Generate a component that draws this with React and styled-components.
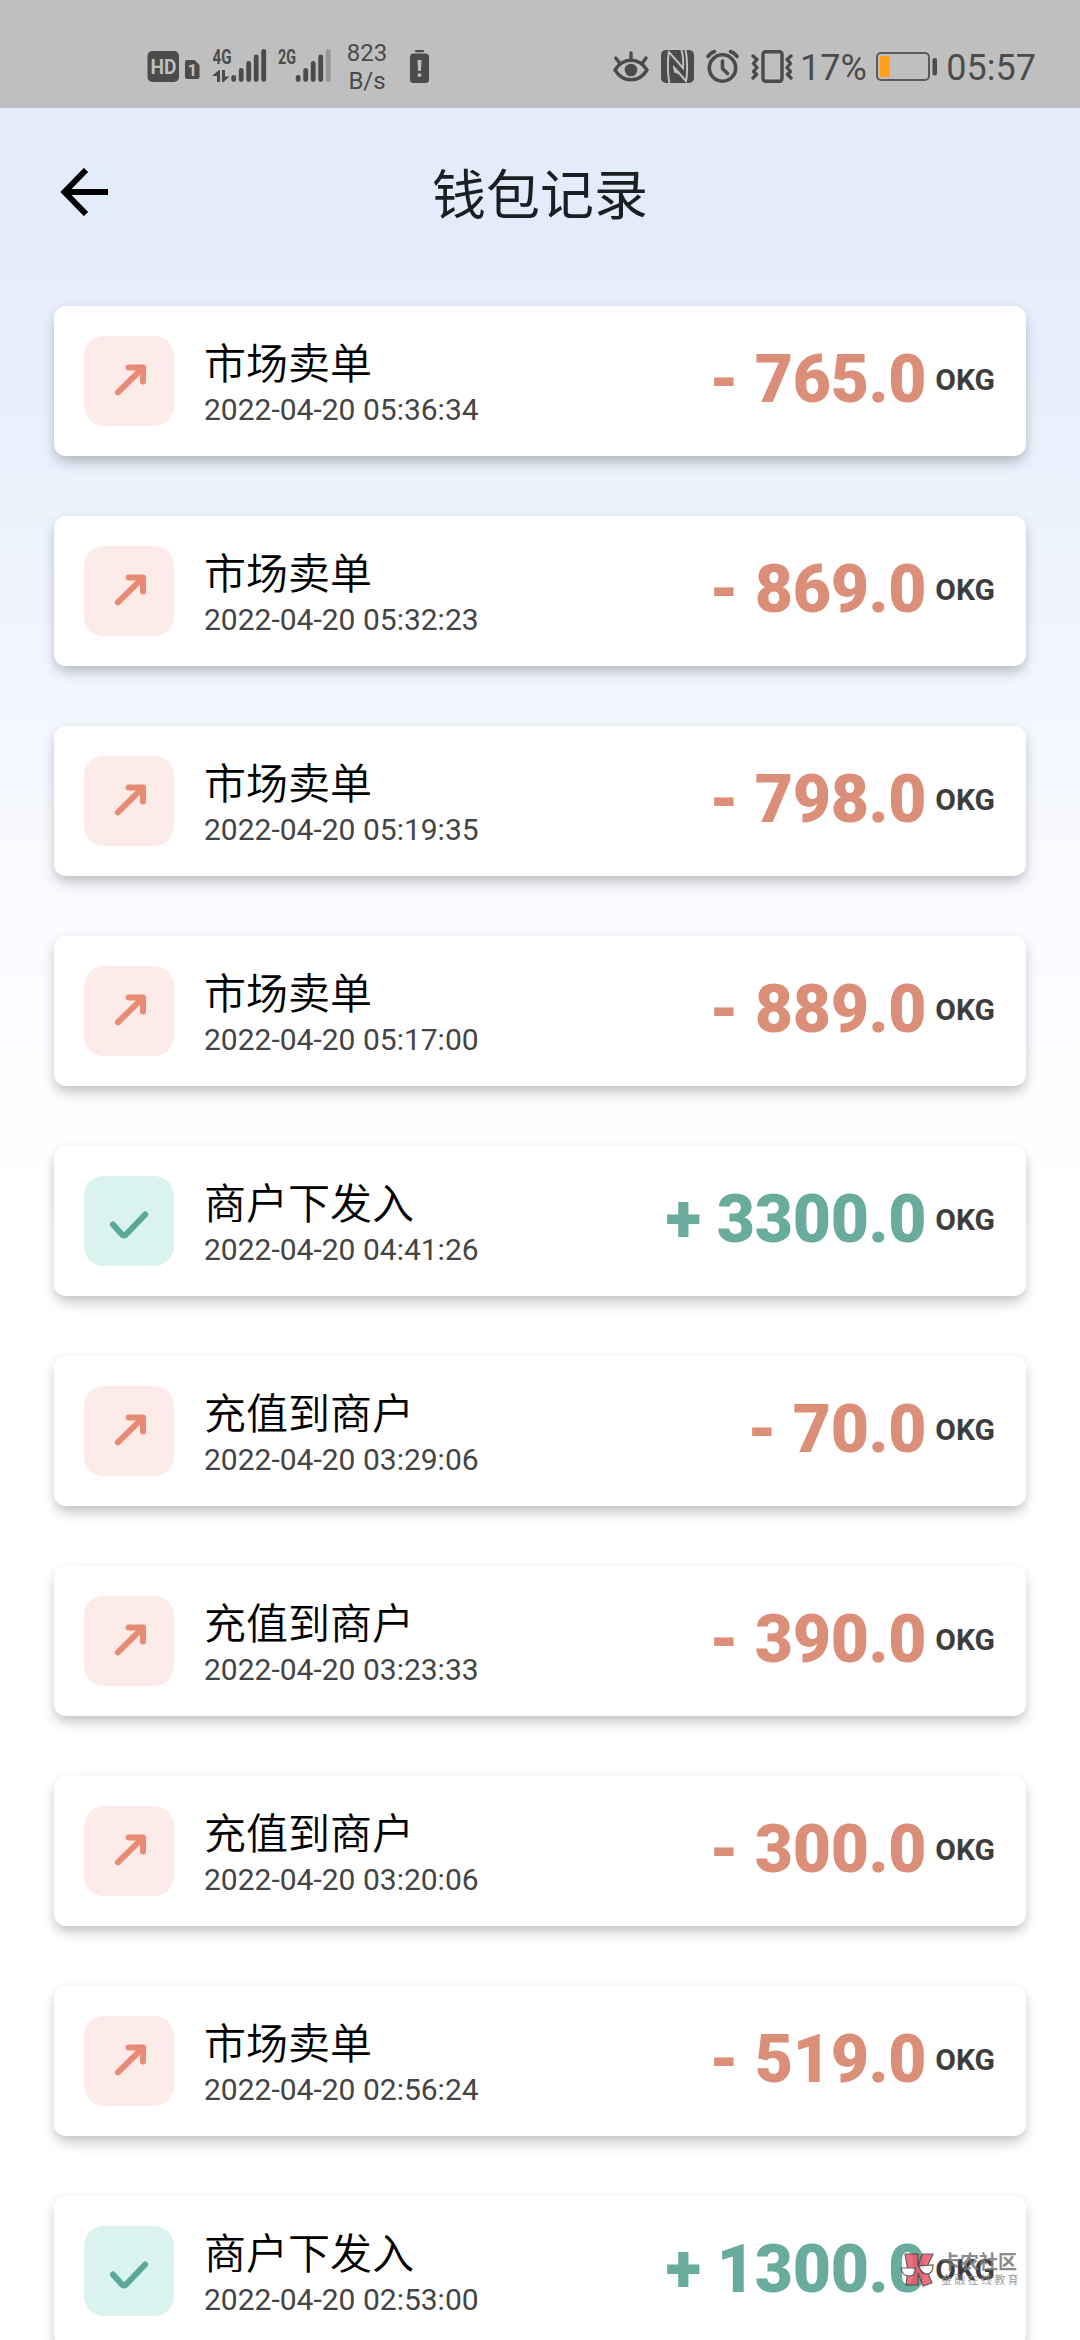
import React from "react";
import styled, { createGlobalStyle } from "styled-components";

const GlobalStyle = createGlobalStyle`
  * {
    box-sizing: border-box;
  }

  body {
    margin: 0;
    background: #fff;
    font-family: Roboto, "Noto Sans CJK SC", sans-serif;
  }
`;

const Screen = styled.div`
  position: relative;
  width: 1080px;
  height: 2340px;
  overflow: hidden;
  background: linear-gradient(#e4ecfb 0, #e6edfc 276px, #e9f1fc 450px, #f1f5fd 640px, #f7f9ff 830px, #fbfcff 1000px, #ffffff 1240px);
`;

/* status bar start */
const StatusBar = styled.div`
  display: flex;
  justify-content: space-between;
  height: 108px;
  padding: 48px 44px 0 147px;
  background: #bfbfbf;
  color: #4b4b4b;
`;

const StatusGroup = styled.div`
  display: flex;
  align-items: flex-start;
`;

const Glyph = styled.svg`
  display: block;
  flex: none;
  height: 36px;
  width: ${(p) => p.$w}px;
  margin-left: ${(p) => p.$gap || 0}px;
  overflow: visible;
  fill: #4b4b4b;
`;

const Speed = styled.div`
  width: 46px;
  margin: -9px 0 0 13px;
  font-size: 24px;
  line-height: 28px;
  text-align: center;
`;

const StatusText = styled.span`
  margin-left: ${(p) => p.$gap}px;
  font-size: 36px;
  line-height: 40px;
  white-space: nowrap;
`;
/* status bar end */

const Header = styled.header`
  display: grid;
  grid-template-columns: 108px 1fr 108px;
  align-items: center;
  height: 168px;
  background: #e3ecfa;

  h1 {
    margin: 9px 0 0;
    font-size: 54px;
    line-height: 80px;
    font-weight: 400;
    text-align: center;
    color: #1b1f23;
  }
`;

const BackButton = styled.button`
  display: block;
  width: 48px;
  height: 48px;
  margin: 0 0 0 60px;
  padding: 0;
  border: 0;
  background: none;
`;

const RecordList = styled.main`
  display: flex;
  flex-direction: column;
  gap: 60px;
  padding: 30px 54px 0;
`;

const Card = styled.article`
  display: flex;
  align-items: center;
  height: 150px;
  flex: none;
  padding: 0 31px 0 30px;
  border-radius: 12px;
  background: #fff;
  box-shadow: 0 8px 14px -2px rgba(0, 0, 0, 0.21), 0 2px 12px rgba(0, 0, 0, 0.07);
`;

const Badge = styled.div`
  width: 90px;
  height: 90px;
  border-radius: 20px;
  background: ${(p) => (p.$income ? "#daf3ee" : "#fcebe9")};

  svg {
    display: block;
    fill: none;
    stroke: ${(p) => (p.$income ? "#59a899" : "#e78b75")};
    stroke-width: 6;
    stroke-linecap: round;
    stroke-linejoin: round;
  }
`;

const Info = styled.div`
  flex: 1;
  margin-left: 30px;
  padding-top: 4px;

  h2 {
    margin: 0;
    font-size: 42px;
    line-height: 54px;
    font-weight: 350;
    color: #000;
  }

  time {
    display: block;
    font-size: 30px;
    line-height: 36px;
    color: #444;
  }
`;

const Amount = styled.div`
  display: flex;
  align-items: center;
  font-weight: 700;

  strong {
    margin-bottom: 3px;
    font-size: 66px;
    line-height: 78px;
    letter-spacing: -0.3px;
    white-space: pre;
    color: ${(p) => (p.$income ? "#69ab9c" : "#db8e78")};
  }

  span {
    margin: 0 0 3px 9px;
    font-size: 30px;
    color: #3d3d3d;
  }
`;

const Watermark = styled.div`
  position: absolute;
  left: 900px;
  top: 2252px;
  display: flex;
  gap: 7px;
  opacity: 0.85;

  b {
    display: block;
    font-size: 19px;
    line-height: 22px;
    font-weight: 700;
    color: #777;
  }

  small {
    display: block;
    font-size: 11px;
    line-height: 14px;
    letter-spacing: 2.3px;
    color: #8a8a8a;
    white-space: nowrap;
  }
`;

const records = [
  { title: "市场卖单", time: "2022-04-20 05:36:34", amount: "- 765.0" },
  { title: "市场卖单", time: "2022-04-20 05:32:23", amount: "- 869.0" },
  { title: "市场卖单", time: "2022-04-20 05:19:35", amount: "- 798.0" },
  { title: "市场卖单", time: "2022-04-20 05:17:00", amount: "- 889.0" },
  { title: "商户下发入", time: "2022-04-20 04:41:26", amount: "+ 3300.0" },
  { title: "充值到商户", time: "2022-04-20 03:29:06", amount: "- 70.0" },
  { title: "充值到商户", time: "2022-04-20 03:23:33", amount: "- 390.0" },
  { title: "充值到商户", time: "2022-04-20 03:20:06", amount: "- 300.0" },
  { title: "市场卖单", time: "2022-04-20 02:56:24", amount: "- 519.0" },
  { title: "商户下发入", time: "2022-04-20 02:53:00", amount: "+ 1300.0" },
];

const Bars = ({ x, weak }) =>
  [7, 14, 21, 27.5, 33].map((h, i) => (
    <rect
      key={h}
      x={x + i * 7.5}
      y={34 - h}
      width="4.8"
      height={h}
      rx="2.4"
      opacity={weak && i === 4 ? 0.35 : 1}
    />
  ));

const netText = {
  fontFamily: "Roboto",
  fontWeight: 700,
  fontSize: 20,
  lengthAdjust: "spacingAndGlyphs",
};

const StatusIcons = () => (
  <StatusBar>
    <StatusGroup>
      <Glyph $w={32} viewBox="0 0 32 36">
        <rect y="3" x="0.5" width="31.5" height="31" rx="5" />
        <text x="3.5" y="26" fontSize="21" fontWeight="700" fill="#bfbfbf" textLength="26" lengthAdjust="spacingAndGlyphs">
          HD
        </text>
      </Glyph>
      <Glyph $w={14} $gap={6} viewBox="0 0 14 36">
        <path d="M2 12h7.5l5 5v12a2 2 0 0 1-2 2H2a2 2 0 0 1-2-2V14a2 2 0 0 1 2-2z" />
        <text x="2.6" y="28" fontSize="17" fontWeight="700" fill="#bfbfbf">
          1
        </text>
      </Glyph>
      <Glyph $w={54} $gap={13} viewBox="0 0 54 36">
        <text x="0.5" y="16" textLength="19" {...netText}>
          4G
        </text>
        <path d="M5 22v12h3V22H7L0 28h5zM10 22v12h1.5l6-5.5H13V22z" />
        <Bars x={19.3} />
      </Glyph>
      <Glyph $w={53} $gap={12} viewBox="0 0 53 36">
        <text x="0" y="16" textLength="18" {...netText}>
          2G
        </text>
        <Bars x={17.8} weak />
      </Glyph>
      <Speed>
        823
        <br />
        B/s
      </Speed>
      <Glyph $w={19} $gap={20} viewBox="0 0 19 36">
        <rect x="5" y="2" width="9" height="2.2" rx="1" />
        <rect x="0" y="5.5" width="19" height="29.5" rx="3.5" />
        <path d="M7.5 12h4l-.6 11H8.1zM7.8 25.5h3.4v3.2H7.8z" fill="#bfbfbf" />
      </Glyph>
    </StatusGroup>

    <StatusGroup>
      <Glyph $w={36} viewBox="0 0 36 36">
        <g fill="none" stroke="#4b4b4b" strokeWidth="3.4" strokeLinecap="round">
          <path d="M2 22C10 9 26 9 34 22C26 35 10 35 2 22z" strokeLinejoin="round" />
          <path d="M18 11V5M6.5 15L2.8 10M29.5 15L33 10" />
        </g>
        <circle cx="18" cy="22" r="6.3" />
      </Glyph>
      <Glyph $w={33} $gap={12} viewBox="0 0 33 36">
        <rect y="2" width="33" height="33" rx="5" />
        <g fill="none" stroke="#bfbfbf" strokeWidth="2">
          <path d="M8.5 35C6.5 27 6.5 10 8 4L22 20C22.500 13 22 7 20.5 2" />
          <path d="M24.500 2C26.500 10 26.500 27 25 33L12.500 19" />
        </g>
        <path d="M12 17l9 10.500-8-3z" fill="#bfbfbf" />
      </Glyph>
      <Glyph $w={33} $gap={12} viewBox="0 0 33 36">
        <g fill="none" stroke="#4b4b4b" strokeWidth="3.6" strokeLinecap="round" strokeLinejoin="round">
          <circle cx="16.5" cy="20" r="13.2" />
          <path d="M16.5 13v7.5l5 5" />
          <path d="M2 8.5C3.5 6 5.5 4.5 8.5 3.5M31 8.5C29.5 6 27.5 4.5 24.5 3.5" />
        </g>
      </Glyph>
      <Glyph $w={42} $gap={12} viewBox="0 0 42 36">
        <g fill="none" stroke="#4b4b4b" strokeWidth="3.4" strokeLinecap="round" strokeLinejoin="round">
          <rect x="12" y="3.7" width="19" height="29.6" rx="2.5" />
          <path d="M2 8l4 3.5-3.5 4 3.5 4-3.5 4 3 3L2 30M40 8l-4 3.5 3.5 4-3.5 4 3.5 4-3 3L40 30" />
        </g>
      </Glyph>
      <StatusText $gap={7}>17%</StatusText>
      <Glyph $w={62} $gap={9} viewBox="0 0 62 36">
        <rect x="1" y="5" width="52" height="27" rx="4" fill="none" stroke="#5a5a5a" strokeWidth="2" />
        <rect x="4" y="8" width="9.5" height="21" fill="#ff9f1a" />
        <rect x="56.5" y="10" width="4.5" height="17.5" rx="2" />
      </Glyph>
      <StatusText $gap={8.5}>05:57</StatusText>
    </StatusGroup>
  </StatusBar>
);

const RecordCard = ({ title, time, amount }) => {
  const income = amount.startsWith("+");
  return (
    <Card>
      <Badge $income={income}>
        <svg width="90" height="90" viewBox="0 0 90 90">
          {income ? (
            <path d="M29 48.5L37.5 58Q40 61 42.5 58L61.2 38.5" />
          ) : (
            <path d="M33.9 56.3L59 31.6M44.6 31.6H59V45.4" />
          )}
        </svg>
      </Badge>
      <Info>
        <h2>{title}</h2>
        <time>{time}</time>
      </Info>
      <Amount $income={income}>
        <strong>{amount}</strong>
        <span>OKG</span>
      </Amount>
    </Card>
  );
};

const App = () => (
  <>
    <GlobalStyle />
    <Screen>
      <StatusIcons />
      <Header>
        <BackButton aria-label="返回">
          <svg width="48" height="48" viewBox="0 0 48 48" fill="none" stroke="#000" strokeWidth="6">
            <path d="M26 2L4.5 24L26 46M4.5 24H48" />
          </svg>
        </BackButton>
        <h1>钱包记录</h1>
      </Header>
      <RecordList>
        {records.map((record) => (
          <RecordCard key={record.time} {...record} />
        ))}
      </RecordList>
      <Watermark>
        <svg width="34" height="36" viewBox="0 0 34 36" stroke="#444" strokeWidth="1.2">
          <path d="M5 2h13v12l4-12h11l-7 15 6 14-9 3-5-13v12H6l2-15z" fill="#f0566a" />
          <path d="M1 16h14q1 8-6 8T1 16zM19 14l14-1q0 9-6 9t-8-8z" fill="#fff" />
        </svg>
        <div>
          <b>卡农社区</b>
          <small>金融在线教育</small>
        </div>
      </Watermark>
    </Screen>
  </>
);

export default App;
